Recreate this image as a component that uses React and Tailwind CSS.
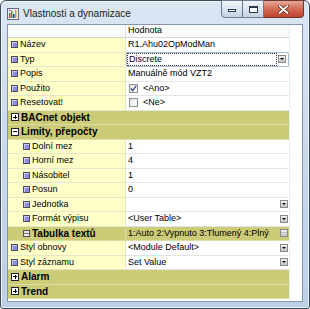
import React from "react"

const rows = [
  { kind: "prop", name: "Název", value: "R1.Ahu02OpModMan" },
  { kind: "prop", name: "Typ", value: "Discrete", combo: true },
  { kind: "prop", name: "Popis", value: "Manuálně mód VZT2" },
  { kind: "prop", name: "Použito", value: "<Ano>", check: "on" },
  { kind: "prop", name: "Resetovat!", value: "<Ne>", check: "off" },
  { kind: "cat", name: "BACnet objekt", open: false },
  { kind: "cat", name: "Limity, přepočty", open: true },
  { kind: "prop", name: "Dolní mez", value: "1", indent: true },
  { kind: "prop", name: "Horní mez", value: "4", indent: true },
  { kind: "prop", name: "Násobitel", value: "1", indent: true },
  { kind: "prop", name: "Posun", value: "0", indent: true },
  { kind: "prop", name: "Jednotka", value: "", indent: true, drop: true },
  { kind: "prop", name: "Formát výpisu", value: "<User Table>", indent: true, drop: true },
  { kind: "table", name: "Tabulka textů", value: "1:Auto 2:Vypnuto 3:Tlumený 4:Plný", indent: true },
  { kind: "prop", name: "Styl obnovy", value: "<Module Default>", drop: true },
  { kind: "prop", name: "Styl záznamu", value: "Set Value", drop: true },
  { kind: "cat", name: "Alarm", open: false },
  { kind: "cat", name: "Trend", open: false },
]

function PropIcon() {
  return (
    <span className="w-[7px] h-[7px] shrink-0 border border-[#4b4b5e] bg-[#8c8cd8] shadow-[inset_1px_1px_0_#c9c9f2]" />
  )
}

function TableIcon() {
  return (
    <span className="w-[7px] h-[7px] shrink-0 border border-[#555] bg-[#e8e8e8] flex flex-col justify-center">
      <span className="h-px bg-[#777]" />
    </span>
  )
}

function ExpandBox({ open }) {
  return (
    <span className="relative w-[8px] h-[8px] shrink-0 border border-[#222] bg-white">
      <span className="absolute left-[1px] right-[1px] top-[2.5px] h-px bg-black" />
      {!open && <span className="absolute top-[1px] bottom-[1px] left-[2.5px] w-px bg-black" />}
    </span>
  )
}

function SmallButton({ dots }) {
  return (
    <span className="w-[8px] h-[8px] shrink-0 mr-[1px] border border-[#8a8a8a] bg-gradient-to-b from-[#f2f2f2] to-[#c4c4c4] flex items-center justify-center">
      {dots ? (
        <span className="text-[6px] leading-none text-black -mt-[3px]">···</span>
      ) : (
        <span className="w-0 h-0 border-l-[2px] border-r-[2px] border-t-[2px] border-l-transparent border-r-transparent border-t-black" />
      )}
    </span>
  )
}

function Checkbox({ on }) {
  return (
    <span className="w-[9px] h-[9px] shrink-0 border border-[#8e8f8f] bg-gradient-to-br from-[#e4e4e4] to-white flex items-center justify-center">
      {on && (
        <svg width="7" height="7" viewBox="0 0 7 7">
          <path d="M0.8 3.6 L2.7 5.6 L6.2 0.9" stroke="#3a4f92" strokeWidth="1.4" fill="none" />
        </svg>
      )}
    </span>
  )
}

function Row({ r }) {
  if (r.kind === "cat") {
    return (
      <div className="flex items-center h-[14.5px] bg-[#cbcb78] border-b border-[#dcdca4] pl-[3px] gap-[2px]">
        <ExpandBox open={r.open} />
        <span className="font-bold text-[10px]">{r.name}</span>
      </div>
    )
  }
  const table = r.kind === "table"
  return (
    <div className="flex h-[14.5px]">
      <div
        className={`w-[118px] shrink-0 flex items-center gap-[2px] border-b border-r ${
          table ? "bg-[#cbcb78] border-[#dcdca4]" : "bg-[#ffffc8] border-[#e6e6c8]"
        } ${r.indent ? "pl-[15px]" : "pl-[3px]"}`}
      >
        {table ? <TableIcon /> : <PropIcon />}
        <span className={table ? "font-bold text-[10px]" : ""}>{r.name}</span>
      </div>
      <div
        className={`flex-1 min-w-0 flex items-center border-b ${
          table ? "bg-[#cbcb78] border-[#dcdca4]" : "bg-white border-[#e4e4e4]"
        }`}
      >
        {r.combo ? (
          <div className="flex-1 h-[15px] -my-[1px] flex items-center border border-[#a9bdd6] rounded-[2px] bg-white pr-[1px]">
            <span className="flex-1 h-[11px] ml-[1px] mr-[2px] flex items-center pl-[1px] outline outline-1 outline-dotted outline-[#333]">
              {r.value}
            </span>
            <SmallButton />
          </div>
        ) : (
          <>
            {r.check && (
              <span className="ml-[3px] mr-[5px]">
                <Checkbox on={r.check === "on"} />
              </span>
            )}
            <span className={`flex-1 whitespace-nowrap ${r.check ? "" : "pl-[2px]"}`}>{r.value}</span>
            {r.drop && <SmallButton />}
            {table && <SmallButton dots />}
          </>
        )}
      </div>
    </div>
  )
}

export default function App() {
  return (
    <div className="w-[310px] h-[309px] font-['Liberation_Sans',Arial,sans-serif] text-[9px] text-black bg-white">
      <div className="w-full h-full flex flex-col rounded-t-[6px] rounded-b-[3px] border border-[#3d4a5a] bg-gradient-to-b from-[#dbe6f3] via-[#c9d9ec] to-[#bcd0e7] shadow-[inset_0_0_0_1px_#eef4fb]">
        {/* title bar */}
        <div className="h-[23px] shrink-0 flex items-start">
          <div className="flex items-center gap-[4px] pl-[6px] pt-[5px]">
            <svg width="12" height="12" viewBox="0 0 12 12">
              <rect x="0.5" y="0.5" width="11" height="11" fill="#eef0f5" stroke="#5f6b86" />
              <rect x="2" y="5" width="1.5" height="5" fill="#d33" />
              <rect x="4" y="3" width="1.5" height="7" fill="#3a3" />
              <rect x="6" y="6" width="1.5" height="4" fill="#33c" />
              <rect x="8" y="2" width="1.5" height="8" fill="#d9a400" />
              <rect x="2" y="2" width="2" height="1" fill="#c3c" />
            </svg>
            <span className="text-[10px] text-[#1b1b1b]">Vlastnosti a dynamizace</span>
          </div>
          <div className="ml-auto mr-[5px] flex h-[18px] -mt-px">
            <div className="w-[22px] border border-[#6a7a90] rounded-bl-[4px] bg-gradient-to-b from-[#f3f6fa] via-[#dbe4ef] to-[#c4d2e3] flex items-end justify-center pb-[5px]">
              <span className="w-[8px] h-[3px] border border-[#2f3a48] bg-white" />
            </div>
            <div className="w-[21px] border-y border-r border-[#6a7a90] bg-gradient-to-b from-[#f3f6fa] via-[#dbe4ef] to-[#c4d2e3] flex items-center justify-center">
              <span className="w-[9px] h-[7px] border border-[#2f3a48] border-t-2 bg-white" />
            </div>
            <div className="w-[40px] border-y border-r border-[#6a3a32] rounded-br-[4px] bg-gradient-to-b from-[#e8a797] via-[#d26b55] to-[#c2412a] flex items-center justify-center">
              <svg width="11" height="9" viewBox="0 0 11 9">
                <path d="M1.5 1 L9.5 8 M9.5 1 L1.5 8" stroke="#4a1a12" strokeWidth="3.2" strokeLinecap="round" />
                <path d="M1.5 1 L9.5 8 M9.5 1 L1.5 8" stroke="#ffffff" strokeWidth="1.8" strokeLinecap="round" />
              </svg>
            </div>
          </div>
        </div>

        {/* client area */}
        <div className="flex-1 mx-[6px] mb-[6px] border border-[#8396ad] bg-white flex">
          <div className="w-[281px] flex flex-col">
            <div className="h-[13px] flex border-b border-[#d6d6d6] bg-[#fbfbfb]">
              <div className="w-[118px] shrink-0 border-r border-[#e2e2e2]" />
              <div className="flex-1 pl-[2px] flex items-center">Hodnota</div>
            </div>
            {rows.map((r) => (
              <Row key={r.name} r={r} />
            ))}
          </div>
          <div className="flex-1 border-l border-[#ededed]" />
        </div>
      </div>
    </div>
  )
}
